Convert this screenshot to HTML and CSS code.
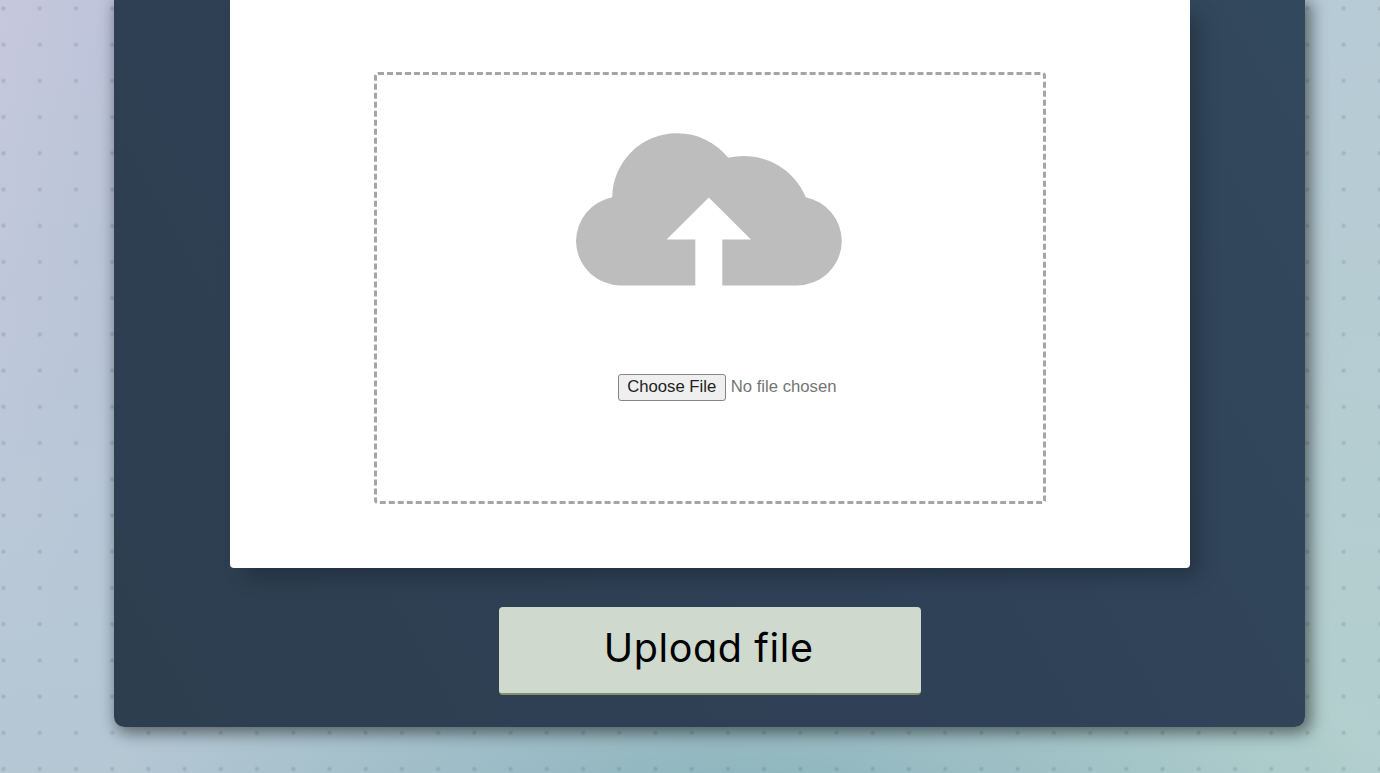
FILE: index.html
```
<!DOCTYPE html>
<html lang="en">
<head>
<meta charset="utf-8">
<title>Upload file</title>
<link rel="stylesheet" href="styles.css">
</head>
<body>
<main class="page">
  <form class="card">
    <section class="sheet">
      <div class="dropzone">
        <svg class="cloud" viewBox="0 0 266 153" aria-hidden="true">
          <path d="M45 152.5A45 45 0 0 1 0 108A45 45 0 0 1 36.2 64.2A64.7 64.5 0 0 1 101 0.3A65 65 0 0 1 152.3 24.8A67 67 0 0 1 229.8 64.2A45 45 0 0 1 265.8 108A45 45 0 0 1 221 152.5H146.3V106.5H175L132.8 64.5L90.5 106.5H119.3V152.5Z"/>
        </svg>
        <div class="file-field">
          <button class="choose" type="button">Choose File</button>
          <span class="file-name">No file chosen</span>
        </div>
      </div>
    </section>
    <button class="upload" type="button">Upload file</button>
  </form>
</main>
</body>
</html>
```
FILE: styles.css
```
* { box-sizing: border-box; }
body {
  margin: 0;
  overflow: hidden;
}
.page {
  display: flex;
  align-items: flex-start;
  height: 773px;
  padding-left: 113.7px;
  background:
    radial-gradient(circle, rgba(55, 70, 85, .17) 0 1px, rgba(55, 70, 85, 0) 3px) -14.6px -9.7px / 36.22px 36.22px,
    radial-gradient(ellipse 640px 220px at 740px 800px, rgba(132, 176, 184, .85), rgba(132, 176, 184, 0)),
    radial-gradient(ellipse 800px 700px at 1280px 773px, rgba(178, 208, 205, .9), rgba(178, 208, 205, 0)),
    linear-gradient(180deg, rgba(184, 202, 213, 0) 0%, rgba(184, 202, 214, .7) 70%, rgba(180, 200, 211, .9) 100%),
    linear-gradient(100deg, #c6c8dd 0, #bac2d9 170px, #b5cbd6 1180px, #b8cbd4 100%);
}
.card {
  display: flex;
  flex-direction: column;
  align-items: center;
  width: 1191px;
  height: 727px;
  padding-left: 1px;
  border-radius: 0 0 10px 10px;
  background: linear-gradient(60deg, #2d3e4f, #2f4157 55%, #32485d);
  box-shadow: 4px 4px 16px 2px rgba(0, 0, 0, .5);
}
.sheet {
  flex: none;
  width: 960px;
  height: 568px;
  padding: 72px 144px 64px;
  border-radius: 0 0 4px 4px;
  background: #fff;
  box-shadow: 12px 12px 20px -4px rgba(0, 0, 0, .25);
}
.dropzone {
  display: flex;
  flex-direction: column;
  align-items: center;
  height: 432px;
  padding-top: 58px;
  border: 3px dashed #a5a5a5;
  border-radius: 4px;
}
.cloud {
  width: 266px;
  height: 153px;
  margin-right: 2px;
  fill: #bdbdbd;
}
.file-field {
  display: flex;
  align-items: center;
  gap: 5px;
  height: 27px;
  margin: 88px 0 0 34.8px;
  font: 16.7px "Liberation Sans", Arial, sans-serif;
  color: #757575;
}
.choose {
  width: 108px;
  height: 27px;
  padding: 0 0 2px;
  border: 1px solid #858585;
  border-radius: 3px;
  background: #efefef;
  color: #222;
  font: inherit;
  white-space: nowrap;
}
.file-name { padding-bottom: 2px; white-space: nowrap; }
.upload {
  width: 422px;
  height: 88px;
  margin-top: 39px;
  padding: 0 2px 4px 0;
  border: 0;
  border-bottom: 2px solid #82906f;
  border-radius: 4px;
  background: #cfd9ce;
  color: #000;
  font: 400 39.5px Inter, sans-serif;
  letter-spacing: .6px;
  font-feature-settings: "cv11", "ss03";
}
```
